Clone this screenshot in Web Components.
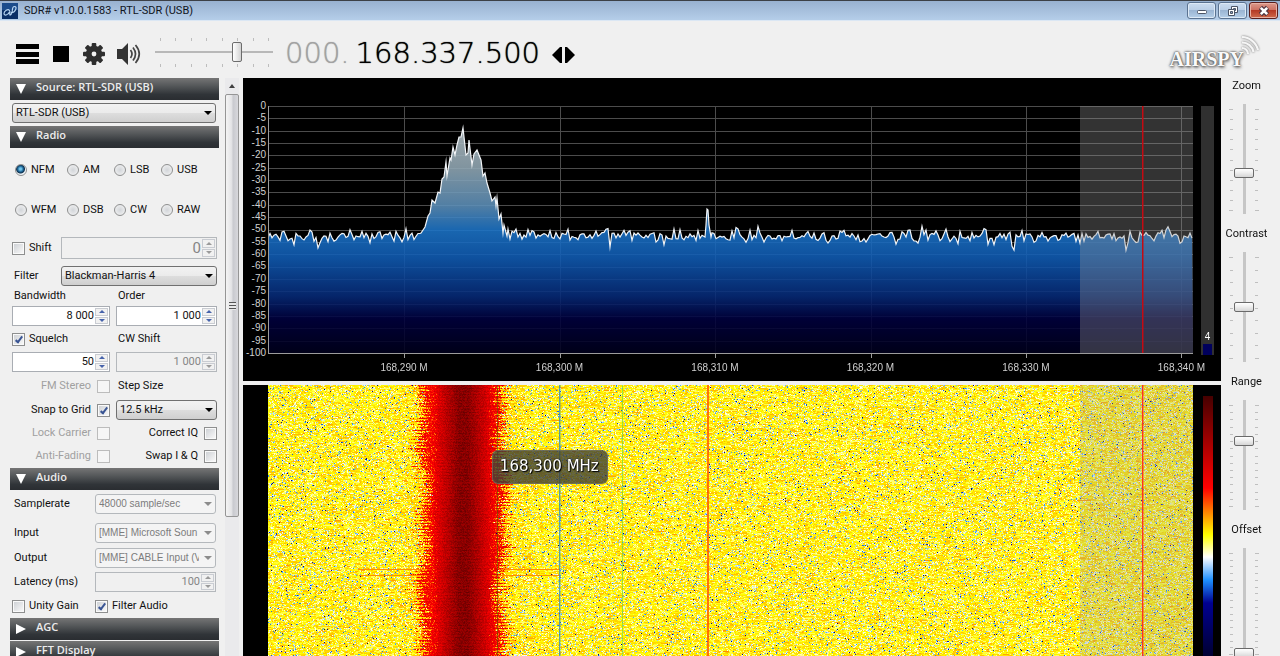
<!DOCTYPE html>
<html lang="en">
<head>
<meta charset="utf-8">
<title>SDR# v1.0.0.1583 - RTL-SDR (USB)</title>
<style>
html, body { height: 100%; margin: 0; }
body { overflow: hidden; background: #f0f0f0; color: #111; font: 11px/14px Roboto, "Liberation Sans", sans-serif; }
</style>
</head>
<body>
<sdr-app></sdr-app>
<script>
function define(name, html, setup) {
  const tpl = document.createElement('template');
  tpl.innerHTML = html;
  customElements.define(name, class extends HTMLElement {
    connectedCallback() {
      if (this.shadowRoot) return;
      this.attachShadow({ mode: 'open' }).append(tpl.content.cloneNode(true));
      if (setup) setup(this, this.shadowRoot);
    }
  });
}

/* seeded generator, so the noise is the same on every load */
function rng(seed) {
  return () => {
    seed = (seed + 0x6D2B79F5) | 0;
    let t = Math.imul(seed ^ (seed >>> 15), 1 | seed);
    t = (t + Math.imul(t ^ (t >>> 7), 61 | t)) ^ t;
    return ((t ^ (t >>> 14)) >>> 0) / 4294967296;
  };
}

define('sdr-titlebar', `
<style>
:host { display: flex; align-items: center; box-sizing: border-box; height: 21px; padding: 0 2px; border-top: 1px solid #3c4046; border-bottom: 1px solid #dbe7f4; background: linear-gradient(#98b1d0, #b5cee9); }
.logo { width: 16px; height: 16px; margin-right: 6px; }
h1 { flex: 1; margin: 0; font: 11px/16px Roboto, sans-serif; color: #10141c; white-space: nowrap; }
.buttons { display: flex; gap: 2px; }
button { width: 29px; height: 17px; padding: 0; border: 1px solid #5b7391; border-radius: 3px; background: linear-gradient(#cbdcef, #b9cee6 48%, #9bb5d3 50%, #b5cfe8); box-shadow: inset 0 0 0 1px #dde9f6; display: grid; place-items: center; }
button.close { border-color: #5a1e1c; background: linear-gradient(#dc9a8c, #cc6f5f 48%, #b53a26 50%, #cf6a4c); box-shadow: inset 0 0 0 1px #e8b1a4; }
button svg { width: 14px; height: 12px; }
</style>
<svg class="logo" viewBox="0 0 16 16"><rect width="16" height="16" fill="#0b2f66"/><rect width="16" height="7" fill="#1b4c8c"/><path d="M7.500 9C6 12.500 2 13 2 10.500S6 5.500 7.500 7.500S6.500 13.500 9 11.500S9 3.500 12.500 3.500S13 10 9 9.500" fill="none" stroke="#b7d5f2" stroke-width="1.200"/></svg>
<h1>SDR# v1.0.0.1583 - RTL-SDR (USB)</h1>
<div class="buttons">
<button aria-label="Minimize"><svg viewBox="0 0 14 12"><rect x="2.500" y="5.500" width="9" height="3" rx="1" fill="#fff" stroke="#4c5566"/></svg></button>
<button aria-label="Restore"><svg viewBox="0 0 14 12"><path d="M5.500 1.500h6v6h-6z" fill="#fff" stroke="#4c5566"/><path d="M7.500 3.500h2v2h-2z" fill="#8fa9c8" stroke="#4c5566"/><path d="M2.500 4.500h6v6h-6z" fill="#fff" stroke="#4c5566"/><path d="M4.500 6.500h2v2h-2z" fill="#8fa9c8" stroke="#4c5566"/></svg></button>
<button class="close" aria-label="Close"><svg viewBox="0 0 14 12"><path d="M3.500 2.500L10.500 9.500M10.500 2.500L3.500 9.500" stroke="#4a3440" stroke-width="4.600"/><path d="M3.800 2.800L10.200 9.200M10.200 2.800L3.800 9.200" stroke="#fff" stroke-width="2.600"/></svg></button>
</div>`);

define('sdr-toolbar', `
<style>
:host { display: flex; align-items: center; height: 55px; padding: 0 20px 0 16px; }
button { border: 0; padding: 0; background: none; display: block; }
svg { display: block; }
.icons { display: flex; align-items: center; gap: 13px; padding-top: 11px; }
.volume { position: relative; width: 118px; height: 30px; margin: 6px 12px 0 14px; }
.volume svg { width: 118px; height: 30px; }
.volume input { position: absolute; inset: 5px 0 auto 0; width: 118px; height: 20px; margin: 0; appearance: none; background: linear-gradient(#b8b8b8, #b8b8b8) center / 100% 2px no-repeat; }
.volume input::-webkit-slider-thumb { appearance: none; box-sizing: border-box; width: 10px; height: 20px; border: 1px solid #6c6c6c; border-radius: 2px; background: linear-gradient(90deg, #fff, #e9e9e9 50%, #d2d2d2); }
.freq { display: flex; padding-top: 9px; font: 200 29px/36px "DejaVu Sans", "DejaVu Sans Light", sans-serif; color: #000; text-shadow: 0 0 1px currentColor; white-space: nowrap; }
.freq .zero { color: #a2a2a2; margin-right: 6px; }
.step { display: flex; gap: 3px; margin: 12px 0 0 12px; }
.brand { margin-left: auto; display: flex; padding-top: 7px; }
.brand span { font: bold 20px/24px "Liberation Serif", serif; color: #fafafa; text-shadow: 0 0 2px #444, 0 0 3px #666, 1px 2px 3px #888; padding-top: 14px; }
.brand svg { width: 22px; height: 24px; margin-left: -6px; filter: drop-shadow(0 0 1px #666); }
</style>
<div class="icons">
<button aria-label="Menu"><svg width="23" height="21" viewBox="0 0 23 21"><path d="M0 0h23v5H0zM0 8h23v5H0zM0 15h23v5H0z"/></svg></button>
<button aria-label="Stop" style="margin:0 1px"><svg width="16" height="16"><rect width="16" height="16"/></svg></button>
<button aria-label="Settings"><svg width="22" height="22" viewBox="-11 -11 22 22"><g fill="#2e2e2e"><circle r="8.200"/><rect x="-2.300" y="-11" width="4.600" height="22" rx="1"/><rect x="-11" y="-2.300" width="22" height="4.600" rx="1"/><g transform="rotate(45)"><rect x="-2.300" y="-11" width="4.600" height="22" rx="1"/><rect x="-11" y="-2.300" width="22" height="4.600" rx="1"/></g></g><circle r="2.400" fill="#f0f0f0"/></svg></button>
<button aria-label="Mute" style="margin-left:-1px"><svg width="24" height="22" viewBox="0 0 24 22"><path d="M0 6h5l6-6v22l-6-6H0z" fill="#333"/><path d="M13.500 7q3 4 0 8M16 4.500q5 6.500 0 13M18.500 2q7.500 9 0 18" fill="none" stroke="#444" stroke-width="1.700"/></svg></button>
</div>
<div class="volume">
<svg viewBox="0 0 118 30"><path d="M5.500 1v3M20.500 1v3M36.500 1v3M51.500 1v3M67.500 1v3M82.500 1v3M98.500 1v3M113.500 1v3M5.500 27v3M20.500 27v3M36.500 27v3M51.500 27v3M67.500 27v3M82.500 27v3M98.500 27v3M113.500 27v3" stroke="#bdbdbd"/></svg>
<input type="range" min="0" max="7" value="5" aria-label="Volume">
</div>
<div class="freq"><span class="zero">000.</span><span>168.337.500</span></div>
<div class="step"><button aria-label="Tune down"><svg width="10" height="18"><path d="M10 1v16H8L0 9l8-8z"/></svg></button><button aria-label="Tune up"><svg width="10" height="18"><path d="M0 1v16h2l8-8-8-8z"/></svg></button></div>
<div class="brand"><span>AIRSPY</span><svg viewBox="0 0 22 24"><path d="M4 15a6 6 0 0 1 6 6M4 9.500a11.500 11.500 0 0 1 11.500 9.500M4 4a17 17 0 0 1 16 13" fill="none" stroke="#f6f6f6" stroke-width="2.200"/></svg></div>`);

define('sdr-section', `
<style>
:host { display: block; }
button { display: flex; align-items: center; gap: 10px; width: 100%; height: 22px; padding: 0 6px; border: 0; background: linear-gradient(#757575, #55585a 35%, #303438 75%, #2a2d31); color: #ececec; font: 600 11px/16px "Open Sans", sans-serif; text-align: left; }
i { width: 0; height: 0; border: 5px solid transparent; border-top: 10px solid #fff; border-bottom: 0; }
i.closed { border: 5px solid transparent; border-left: 10px solid #fff; border-right: 0; }
span { padding-bottom: 4px; }
</style>
<button><i></i><span></span></button><slot></slot>`, (host, root) => {
  root.querySelector('span').textContent = host.getAttribute('heading');
  root.querySelector('i').classList.toggle('closed', host.hasAttribute('closed'));
  root.querySelector('button').setAttribute('aria-expanded', String(!host.hasAttribute('closed')));
});

const formCss = `
.pair { display: grid; grid-template-columns: 98px 101px; column-gap: 6px; align-items: center; }
.h20 { height: 20px; } .h26 { height: 26px; } .h28 { height: 28px; } .h30 { height: 30px; } .h36 { height: 36px; }
label { white-space: nowrap; padding-left: 2px; }
.tick { display: flex; align-items: center; gap: 4px; padding: 0; }
.end { justify-content: flex-end; gap: 6px; }
.off { color: #a0a0a0; }
input[type=checkbox] { appearance: none; box-sizing: border-box; width: 13px; height: 13px; margin: 0; border: 1px solid #8e8f8f; background: linear-gradient(135deg, #cfd2d6, #f8f8f8) content-box, #fafafa; padding: 1px; display: grid; place-items: center; }
input[type=checkbox]:disabled { border-color: #bcbcbc; background: #f6f6f6; }
input[type=checkbox]:checked::after { content: ""; width: 2px; height: 6px; margin-bottom: 2px; border: solid #3a5594; border-width: 0 2px 2px 0; transform: rotate(38deg); }
.select { position: relative; display: block; }
.select::after { content: ""; position: absolute; right: 4px; top: 8px; border: 4px solid transparent; border-top: 4px solid #000; border-bottom: 0; }
select { appearance: none; display: block; box-sizing: border-box; width: 100%; height: 20px; margin: 0; padding: 0 16px 0 3px; border: 1px solid #707070; border-radius: 3px; background: linear-gradient(#f2f2f2, #ebebeb 48%, #dddddd 52%, #cfcfcf); font: inherit; color: #111; opacity: 1; }
select:disabled { border-color: #b4b8bc; background: #f4f4f4; color: #7c7c7c; }
.select.dis::after { border-top-color: #8c8c8c; }
.num { display: flex; box-sizing: border-box; height: 20px; border: 1px solid #a9adb3; background: #fff; padding: 0 1px; align-items: center; }
.num input { flex: 1; min-width: 0; border: 0; padding: 0 1px; margin: 0; background: none; font: inherit; color: #111; text-align: right; outline: 0; }
.num.dis { background: #f0f0f0; border-color: #b4b8bc; }
.num.dis input { color: #858585; }
.spin { display: grid; grid-template-rows: 1fr 1fr; gap: 1px; height: 16px; width: 13px; }
.spin button { display: grid; place-items: center; padding: 0; border: 1px solid #c9ccd2; background: #f1f1f1; min-height: 0; }
.spin i { border: 3px solid transparent; border-bottom: 3px solid #4663ab; border-top: 0; }
.spin button + button i { border: 3px solid transparent; border-top: 3px solid #4663ab; border-bottom: 0; }
.dis .spin i { border-bottom-color: #9a9a9a; }
.dis .spin button + button i { border-top-color: #9a9a9a; border-bottom-color: transparent; }
`;
const num = (id, value, label, dis) => `<div class="num ${dis ? 'dis' : ''}" ><input type="text" id="${id}" value="${value}" ${label ? `aria-label="${label}"` : ''} ${dis ? 'disabled' : ''}><div class="spin"><button aria-label="Increase" ${dis ? 'disabled' : ''}><i></i></button><button aria-label="Decrease" ${dis ? 'disabled' : ''}><i></i></button></div></div>`;
const sel = (id, value, label, dis) => `<div class="select ${dis ? 'dis' : ''}"><select id="${id}" ${label ? `aria-label="${label}"` : ''} ${dis ? 'disabled' : ''}><option>${value}</option></select></div>`;
const box = (id, on, dis) => `<input type="checkbox" id="${id}" ${on ? 'checked' : ''} ${dis ? 'disabled' : ''}>`;

define('sdr-source', `
<style>${formCss} :host { display: block; padding: 3px 3px 3px 2px; }</style>
${sel('src', 'RTL-SDR (USB)', 'Source')}`);

define('sdr-radio', `
<style>${formCss}
:host { display: block; padding: 2px; }
.modes { display: grid; grid-template-columns: 52px 47px 47px 1fr; grid-auto-rows: 40px; padding-left: 3px; align-items: center; }
.modes label { display: flex; align-items: center; gap: 4px; padding: 0; }
input[type=radio] { appearance: none; box-sizing: border-box; width: 12px; height: 12px; margin: 0; border: 1px solid #8e8f8f; border-radius: 50%; background: radial-gradient(#d2d5d9, #f6f6f6); }
input[type=radio]:checked { background: radial-gradient(circle at 45% 40%, #6fc4ea 0 1px, #175b8c 3px, #12344f 4px, #f0f4f8 5px); }
.wide { display: grid; grid-template-columns: 49px 156px; align-items: center; }
.shift .num { height: 22px; } .shift .num input { font-size: 15px; }
.shift .spin { height: 18px; }
</style>
<div class="modes">${['NFM', 'AM', 'LSB', 'USB', 'WFM', 'DSB', 'CW', 'RAW'].map((m, i) => `<label><input type="radio" name="mode" ${i ? '' : 'checked'}>${m}</label>`).join('')}</div>
<div class="wide shift h36"><label class="tick">${box('sh')}Shift</label>${num('shv', '0', 'Shift value', 1)}</div>
<div class="wide h20"><label for="fl">Filter</label>${sel('fl', 'Blackman-Harris 4')}</div>
<div class="pair h20"><label for="bw">Bandwidth</label><label for="or">Order</label></div>
<div class="pair h20">${num('bw', '8 000')}${num('or', '1 000')}</div>
<div class="pair h26"><label class="tick">${box('sq', 1)}Squelch</label><label for="cw">CW Shift</label></div>
<div class="pair h20">${num('sqv', '50', 'Squelch level')}${num('cw', '1 000', '', 1)}</div>
<div class="pair h28"><label class="tick end off">FM Stereo${box('fm', 0, 1)}</label><label for="st">Step Size</label></div>
<div class="pair h20"><label class="tick end">Snap to Grid${box('sn', 1)}</label>${sel('st', '12.5 kHz')}</div>
<div class="pair h26"><label class="tick end off">Lock Carrier${box('lc', 0, 1)}</label><label class="tick end">Correct IQ${box('iq')}</label></div>
<div class="pair h20"><label class="tick end off">Anti-Fading${box('af', 0, 1)}</label><label class="tick end">Swap I &amp; Q${box('sw')}</label></div>`);

define('sdr-audio', `
<style>${formCss}
:host { display: block; padding: 0 2px 2px; }
.line { display: grid; grid-template-columns: 83px 121px; align-items: center; }
select { font: 10px/14px "Liberation Sans", sans-serif; }
</style>
<div class="line h28"><label for="a">Samplerate</label>${sel('a', '48000 sample/sec', '', 1)}</div>
<div class="line h30"><label for="b">Input</label>${sel('b', '[MME] Microsoft Soun', '', 1)}</div>
<div class="line h20"><label for="c">Output</label>${sel('c', '[MME] CABLE Input (V', '', 1)}</div>
<div class="line h28"><label for="d">Latency (ms)</label>${num('d', '100', '', 1)}</div>
<div class="line h20"><label class="tick">${box('e')}Unity Gain</label><label class="tick">${box('f', 1)}Filter Audio</label></div>`);

define('sdr-scrollbar', `
<style>
:host { display: flex; flex-direction: column; width: 14px; background: #eaeaec; align-items: stretch; }
.up { height: 16px; display: grid; place-items: center; }
.up i { border: 3px solid transparent; border-bottom: 4px solid #404040; border-top: 0; }
.thumb { box-sizing: border-box; height: 423px; border: 1px solid #959595; border-radius: 2px; background: linear-gradient(90deg, #f4f4f4, #e4e4e6 45%, #c9cacf 60%, #d8d8dc); display: grid; place-items: center; }
.grip { width: 7px; height: 8px; background: repeating-linear-gradient(#555 0 1px, #e8e8e8 1px 3px); }
</style>
<div class="up"><i></i></div><div class="thumb"><div class="grip"></div></div>`);

define('sdr-slider', `
<style>
:host { display: block; height: 148px; }
label { display: block; height: 20px; line-height: 20px; text-align: center; padding-right: 8px; }
.body { position: relative; width: 30px; height: 110px; margin: 8px 0 0 8px; }
svg { display: block; width: 30px; height: 110px; }
input { position: absolute; inset: 0 auto auto 5px; writing-mode: vertical-lr; direction: rtl; appearance: none; width: 20px; height: 110px; margin: 0; background: linear-gradient(#c6c6c6, #c6c6c6) center / 3px 100% no-repeat; }
input::-webkit-slider-thumb { appearance: none; box-sizing: border-box; width: 20px; height: 10px; border: 1px solid #6a6a6a; border-radius: 2px; background: linear-gradient(#fff, #ececec 50%, #d6d6d6); }
</style>
<label for="s"></label><div class="body"><svg></svg><input id="s" type="range" min="0" max="100"></div>`, (host, root) => {
  root.querySelector('label').textContent = host.getAttribute('label');
  root.querySelector('input').value = host.getAttribute('value');
  const n = +host.getAttribute('steps');
  let d = '';
  for (let i = 0; i <= n; i++) {
    const y = Math.round(5 + 101 * i / n) + 0.5, end = i === 0 || i === n ? 0 : 1;
    d += `M${end} ${y}H4M26 ${y}H${30 - end}`;
  }
  root.querySelector('svg').innerHTML = `<path d="${d}" stroke="#bfbfbf"/>`;
});

/* both displays span 925 units of frequency, scaled to the width they get */
const SPAN = 925, MARKS = [136, 292, 447, 603, 758, 913];

function onResize(canvas, paint) {
  new ResizeObserver(() => {
    const w = canvas.clientWidth, h = canvas.clientHeight;
    if (!w || !h) return;
    canvas.width = w; canvas.height = h;
    paint(canvas.getContext('2d'), w, h);
  }).observe(canvas);
}

const PEAK = [[153,127],[157,121],[160,110],[162,107],[164,94],[167,97],[170,86],[172,87],[174,73],[176,71],[178,56],[179,70],[182,52],[183,54],[185,41],[187,49],[189,39],[191,31],[193,31],[195,22],[198,49],[200,47],[201,34],[204,59],[206,48],[209,44],[213,54],[215,70],[217,67],[219,77],[222,87],[224,95],[227,91],[228,100],[229,92],[231,113],[233,108],[235,127],[236,119],[239,130],[240,123],[242,133]];

define('sdr-spectrum', `
<style>
:host { display: grid; grid-template-columns: 25px 1fr 28px; background: #000; color: #d0d0d0; font: 10px/12px "Liberation Sans", sans-serif; padding: 28px 0 0; }
.y { display: flex; flex-direction: column; justify-content: space-between; align-items: flex-end; height: 259px; margin: -6px 2px -6px 0; }
canvas { display: block; width: 100%; height: 252px; }
.side { display: flex; flex-direction: column; justify-content: flex-end; align-items: center; box-sizing: border-box; width: 13px; height: 249px; margin-left: 8px; background: #303030; color: #fff; }
.side i { width: 9px; height: 11px; margin-top: 1px; background: #00005c; }
.x { grid-column: 2; display: grid; grid-template-columns: 6.3% repeat(6, 16.81%); height: 23px; padding-top: 4px; box-sizing: border-box; text-align: center; white-space: nowrap; }
.x span:first-child { grid-column: 2; }
</style>
<div class="y">${Array.from({ length: 21 }, (_, i) => `<span>${i ? -5 * i : 0}</span>`).join('')}</div>
<canvas></canvas>
<div class="side"><span>4</span><i></i></div>
<div class="x">${[290, 300, 310, 320, 330, 340].map(v => `<span>168,${v} M</span>`).join('')}</div>`, (host, root) => {
  onResize(root.querySelector('canvas'), (c, w) => {
    const k = w / SPAN, H = 247, rand = rng(11);
    c.fillStyle = '#4c4c4c';
    for (let i = 0; i < 20; i++) c.fillRect(0, Math.round(i * H / 20), w, 1);
    MARKS.forEach(m => c.fillRect(Math.round(m * k), 0, 1, H));
    const pts = [];
    let last = 131;
    for (let x = 0; x <= SPAN; x += 2) {
      if (x >= 153 && x <= 242) { if (x === 154) PEAK.forEach(p => pts.push([...p])); continue; }
      if (x >= 436 && x <= 442) { if (x === 436) pts.push([437, 131], [438, 119], [439, 103], [440, 104], [441, 119], [443, 131]); continue; }
      const dip = rand() < 0.12 ? rand() * 10 : 0, rise = rand() < 0.1 ? rand() * 6 : 0;
      last = last * 0.2 + 0.8 * (130 + (rand() + rand() - 1) * 9) + dip - rise;
      pts.push([x, last]);
    }
    const g = c.createLinearGradient(0, 20, 0, H);
    [[0, '#b4bfc4'], [.18, '#93a9b5'], [.35, '#5d90ba'], [.46, '#1c74c8'], [.58, '#105cb4'], [.75, '#062a78'], [.85, '#00003e'], [1, '#00001c']].forEach(s => g.addColorStop(...s));
    c.beginPath(); c.moveTo(0, H);
    pts.forEach(p => c.lineTo(p[0] * k, p[1]));
    c.lineTo(w, H); c.closePath();
    c.globalAlpha = .88; c.fillStyle = g; c.fill(); c.globalAlpha = 1;
    c.beginPath(); pts.forEach(p => c.lineTo(p[0] * k, p[1]));
    c.strokeStyle = '#f2f5f8'; c.lineWidth = 1.2; c.stroke();
    c.fillStyle = 'rgba(150,150,150,.34)'; c.fillRect(812 * k, 0, 113 * k, H);
    c.fillStyle = '#c40a12'; c.fillRect(Math.round(874 * k), 0, 1.5, H);
    c.fillStyle = '#9c9c9c'; c.fillRect(0, 0, 1, H); c.fillRect(0, H, w, 1);
    MARKS.forEach(m => c.fillRect(Math.round(m * k), H, 1, 5));
  });
});

/* power scale, strongest first: position on the legend in pixels and colour */
const SCALE = [[0, 70, 0, 0], [92, 255, 0, 0], [139, 255, 255, 0], [161, 255, 255, 255], [184, 30, 144, 255], [207, 0, 0, 145], [260, 0, 0, 50]];
function colour(t) {
  t = Math.max(0, Math.min(259, t));
  let i = 1;
  while (t > SCALE[i][0]) i++;
  const a = SCALE[i - 1], b = SCALE[i], f = (t - a[0]) / (b[0] - a[0]);
  return [1, 2, 3].map(j => a[j] + (b[j] - a[j]) * f);
}

define('sdr-waterfall', `
<style>
:host { display: grid; grid-template-columns: 25px 1fr 28px; background: #000; min-height: 0; overflow: hidden; }
.view { grid-column: 2; position: relative; min-height: 0; overflow: hidden; }
canvas { display: block; width: 100%; height: 100%; }
.legend { width: 10px; margin: 11px 0 0 10px; background: linear-gradient(#460000, #f00 92px, #ff0 139px, #fff 161px, #1e90ff 184px, #000091 207px, #000032 260px); }
.tip { position: absolute; left: 24.2%; top: 65px; box-sizing: border-box; height: 34px; padding: 0 8px 0 7px; border: 1px solid rgba(120,120,110,.6); border-radius: 6px; background: rgba(64,64,54,.8); color: #fff; font: 15px/30px "DejaVu Sans", sans-serif; text-shadow: 0 0 2px #000, 1px 1px 1px #000; white-space: nowrap; }
</style>
<div class="view"><canvas></canvas><div class="tip">168,300 MHz</div></div><div class="legend"></div>`, (host, root) => {
  onResize(root.querySelector('canvas'), (c, w, h) => {
    const rand = rng(5), k = w / SPAN, img = c.createImageData(w, h), d = img.data;
    for (let y = 0; y < h; y++) {
      const sway = 2.5 * Math.sin(y / 27) + 2 * Math.sin(y / 11 + 2);
      const wl = 34 + sway + (rand() - .5) * 6, wr = 33 - sway + (rand() - .5) * 8;
      const streak = y % 3 === 0 ? 7 : 0;
      let noise = 140;
      for (let x = 0; x < w; x++) {
        const u = x / k;
        /* strong noise bins smear sideways, weak ones stay one pixel wide */
        if (noise > 150 || rand() > .4) {
          noise = 136 - 13 * Math.log(-Math.log(1 - rand() * .9999) + .0001);
          if (noise < 139) noise = 139 - (139 - noise) * .68;
        }
        let t = noise;
        const dx = u - 195, out = Math.abs(dx) - (dx < 0 ? wl : wr) - streak;
        const e = Math.abs(dx) / 36;
        if (out < 0) {
          t = 34 + 58 * Math.min(1, Math.max(0, e - .12) * 1.3) + (rand() - .5) * 24 - streak;
          if (e > .7 && rand() < .1) t += 25;
        }
        else if (out < 10) t = rand() < (10 - out) / 13 ? 80 + rand() * 38 : noise - 8;
        else if (out < 28) t = noise - 4 * rand();
        if ((y === 184 || y === 190) && u > 90 && u < 292 && out > 0) t = Math.min(t, 118);
        let p = colour(t);
        if (u >= 812) p = [p[0] * .72 + 43, p[1] * .72 + 43, p[2] * .72 + 43];
        const o = (y * w + x) * 4;
        d[o] = p[0]; d[o + 1] = p[1]; d[o + 2] = p[2]; d[o + 3] = 255;
      }
    }
    c.putImageData(img, 0, 0);
    const line = (u, width, style) => { c.fillStyle = style; c.fillRect(Math.round(u * k), 0, width, h); };
    line(229, 1, 'rgba(70,90,0,.55)');
    line(291, 1, 'rgba(50,140,190,.8)');
    line(292, 1, 'rgba(50,140,190,.35)');
    line(354, 1, 'rgba(110,220,60,.7)');
    line(439, 2, 'rgba(255,95,0,.85)');
    line(874, 1, '#ff3020');
    line(875, 1, 'rgba(255,60,30,.4)');
  });
});

define('sdr-app', `
<style>
:host { display: flex; flex-direction: column; height: 100vh; overflow: hidden; }
main { flex: 1; display: flex; min-height: 0; }
.panel { width: 209px; margin: 2px 6px 0 10px; overflow: hidden; }
sdr-scrollbar { margin: 2px 4px 0 0; }
.displays { flex: 1; display: flex; flex-direction: column; gap: 4px; min-width: 0; padding-top: 2px; }
sdr-waterfall { flex: 1; }
.controls { width: 59px; overflow: hidden; }
.closed { display: flex; flex-direction: column; gap: 1px; }
</style>
<sdr-titlebar></sdr-titlebar>
<sdr-toolbar></sdr-toolbar>
<main>
<div class="panel">
<sdr-section heading="Source: RTL-SDR (USB)"><sdr-source></sdr-source></sdr-section>
<sdr-section heading="Radio"><sdr-radio></sdr-radio></sdr-section>
<sdr-section heading="Audio"><sdr-audio></sdr-audio></sdr-section>
<div class="closed"><sdr-section heading="AGC" closed></sdr-section><sdr-section heading="FFT Display" closed></sdr-section></div>
</div>
<sdr-scrollbar></sdr-scrollbar>
<div class="displays"><sdr-spectrum></sdr-spectrum><sdr-waterfall></sdr-waterfall></div>
<div class="controls">
<sdr-slider label="Zoom" value="36" steps="10"></sdr-slider>
<sdr-slider label="Contrast" value="50" steps="8"></sdr-slider>
<sdr-slider label="Range" value="64" steps="14"></sdr-slider>
<sdr-slider label="Offset" value="0" steps="15"></sdr-slider>
</div>
</main>`);
</script>
</body>
</html>
